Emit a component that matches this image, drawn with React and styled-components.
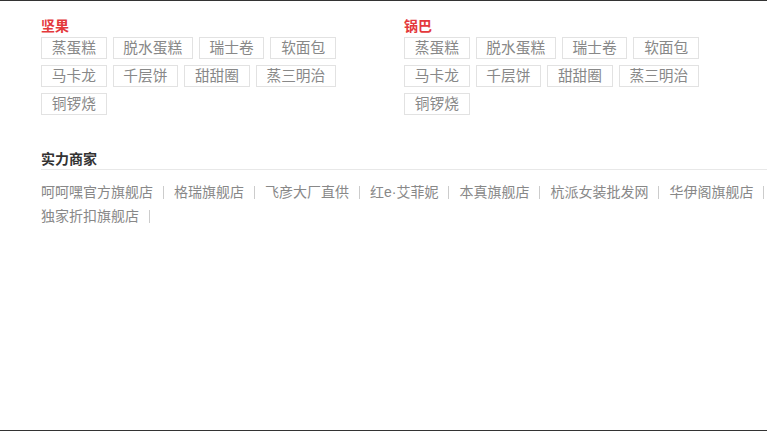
import styled, { createGlobalStyle } from 'styled-components';

const GlobalStyle = createGlobalStyle`
  html, body {
    margin: 0;
    padding: 0;
    background: #fff;
  }
  body {
    font-family: "Liberation Sans", "Noto Sans CJK SC", sans-serif;
    font-size: 14px;
    color: #888;
  }
`;

const Page = styled.div`
  box-sizing: border-box;
  width: 767px;
  height: 431px;
  border-top: 1px solid #333;
  border-bottom: 1px solid #333;
  padding: 15px 0 0 41px;
  overflow: hidden;
`;

const Categories = styled.div`
  display: grid;
  grid-template-columns: 363px 363px;
`;

const Category = styled.div`
  display: flex;
  flex-direction: column;
`;

const CategoryTitle = styled.h4`
  margin: 0 0 1px;
  font-size: 14px;
  line-height: 20px;
  font-weight: bold;
  color: #e4393c;
`;

const Tags = styled.div`
  display: flex;
  flex-wrap: wrap;
  gap: 6px;
`;

const Tag = styled.a`
  display: block;
  height: 20px;
  line-height: 20px;
  padding: 0 9.75px;
  border: 1px solid #e2e2e2;
  color: #888;
  font-size: 14.7px;
  text-decoration: none;
  white-space: nowrap;
`;

const Shops = styled.div`
  width: 760px;
  margin-top: 34px;
`;

const ShopsTitle = styled.h4`
  margin: 0;
  font-size: 14px;
  line-height: 20px;
  font-weight: bold;
  color: #333;
  border-bottom: 1px solid #e8e8e8;
`;

const ShopList = styled.div`
  display: flex;
  flex-wrap: wrap;
  margin-top: 10px;
`;

const Shop = styled.a`
  display: flex;
  align-items: center;
  line-height: 24px;
  color: #888;
  text-decoration: none;
  white-space: nowrap;

  &::after {
    content: '';
    width: 1px;
    height: 13px;
    margin: 0 10px;
    background: #ccc;
  }
`;

const categories = [
  {
    name: '坚果',
    tags: ['蒸蛋糕', '脱水蛋糕', '瑞士卷', '软面包', '马卡龙', '千层饼', '甜甜圈', '蒸三明治', '铜锣烧'],
  },
  {
    name: '锅巴',
    tags: ['蒸蛋糕', '脱水蛋糕', '瑞士卷', '软面包', '马卡龙', '千层饼', '甜甜圈', '蒸三明治', '铜锣烧'],
  },
];

const shops = [
  '呵呵嘿官方旗舰店',
  '格瑞旗舰店',
  '飞彦大厂直供',
  '红e·艾菲妮',
  '本真旗舰店',
  '杭派女装批发网',
  '华伊阁旗舰店',
  '独家折扣旗舰店',
];

const App = () => (
  <Page>
    <GlobalStyle />
    <Categories>
      {categories.map(cat => (
        <Category key={cat.name}>
          <CategoryTitle>{cat.name}</CategoryTitle>
          <Tags>
            {cat.tags.map(tag => (
              <Tag key={tag} href="#">
                {tag}
              </Tag>
            ))}
          </Tags>
        </Category>
      ))}
    </Categories>
    <Shops>
      <ShopsTitle>实力商家</ShopsTitle>
      <ShopList>
        {shops.map(shop => (
          <Shop key={shop} href="#">
            {shop}
          </Shop>
        ))}
      </ShopList>
    </Shops>
  </Page>
);

export default App;
